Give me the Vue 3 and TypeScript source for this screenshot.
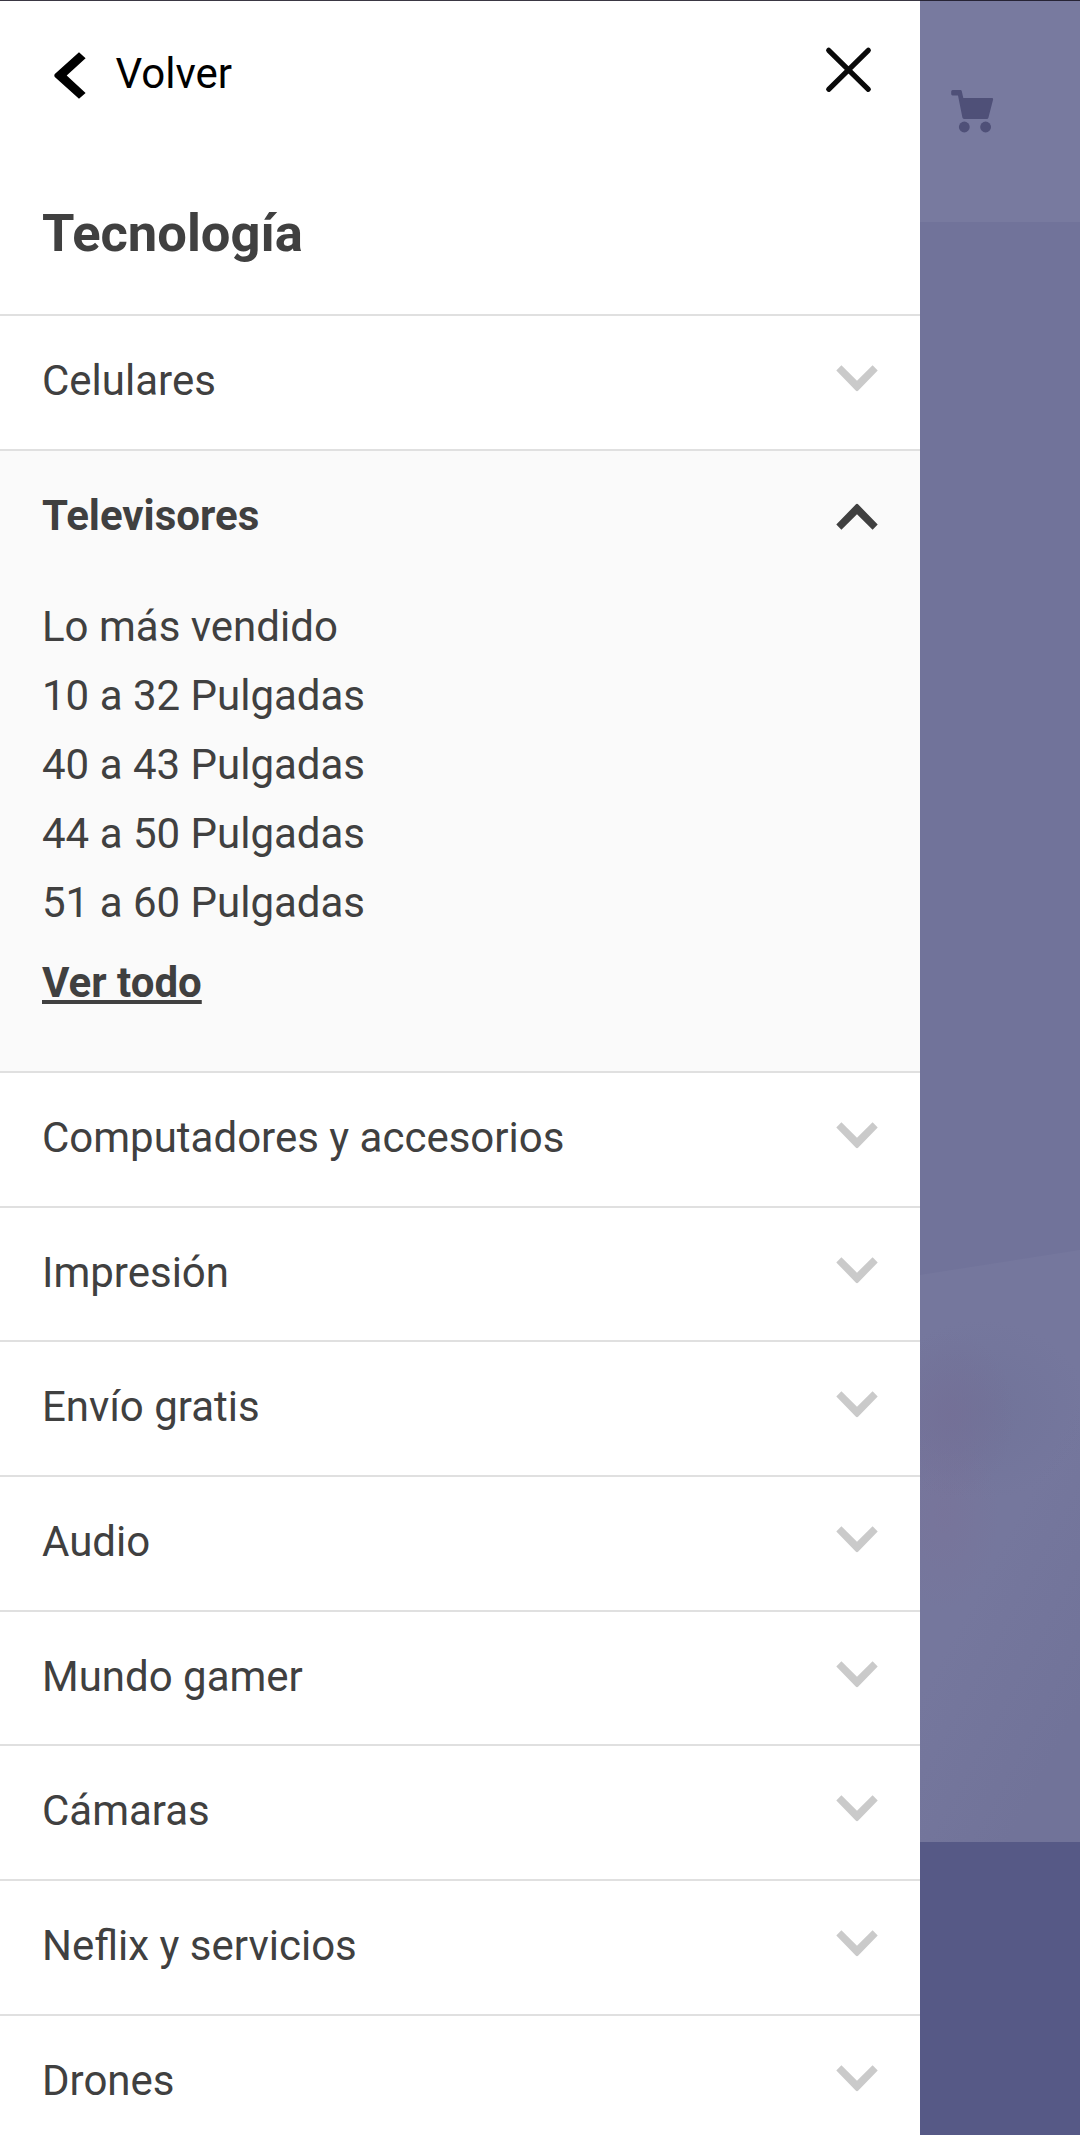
<script setup lang="ts">
import { ref } from 'vue'

interface Category {
  name: string
  links?: string[]
}

const categories: Category[] = [
  { name: 'Celulares' },
  {
    name: 'Televisores',
    links: ['Lo más vendido', '10 a 32 Pulgadas', '40 a 43 Pulgadas', '44 a 50 Pulgadas', '51 a 60 Pulgadas'],
  },
  { name: 'Computadores y accesorios' },
  { name: 'Impresión' },
  { name: 'Envío gratis' },
  { name: 'Audio' },
  { name: 'Mundo gamer' },
  { name: 'Cámaras' },
  { name: 'Neflix y servicios' },
  { name: 'Drones' },
]

const open = ref<string | null>('Televisores')

function toggle(category: Category) {
  open.value = open.value === category.name ? null : category.name
}
</script>

<template>
  <div class="screen">
    <nav class="drawer">
      <header class="bar">
        <button class="back" type="button">
          <svg class="back-icon" viewBox="0 0 32 48" aria-hidden="true">
            <path d="M25 0.3 31.6 6.2 12.7 23.5 31.6 40.9 25 46.7 0.8 24.9Q-0.2 23.5 0.8 22.1Z" />
          </svg>
          <span>Volver</span>
        </button>
        <button class="close" type="button" aria-label="Cerrar">
          <svg viewBox="0 0 46 46" aria-hidden="true">
            <path d="M3.7 3.3 43.3 42.3M43.3 3.3 3.7 42.3" />
          </svg>
        </button>
      </header>

      <h1 class="title">Tecnología</h1>

      <ul class="list">
        <li v-for="c in categories" :key="c.name" class="item" :class="{ open: open === c.name }">
          <button class="row" type="button" @click="toggle(c)">
            <span>{{ c.name }}</span>
            <svg class="chevron" viewBox="0 0 42 27" aria-hidden="true">
              <path d="M0.3 5.4 5.4 0.3 21 15.7 36.6 0.3 41.7 5.4 22.3 25.5Q21 26.8 19.7 25.5Z" />
            </svg>
          </button>
          <div v-if="c.links && open === c.name" class="sub">
            <a v-for="l in c.links" :key="l" class="link">{{ l }}</a>
            <a class="all">Ver todo</a>
          </div>
        </li>
      </ul>
    </nav>

    <aside class="page">
      <div class="page-header">
        <svg class="cart" viewBox="0 0 43 43" aria-hidden="true">
          <path d="M1.6 0H9.4Q10.6 0 10.8 1.2L12.3 8H41.2Q42.4 8 42.1 9.6L37.4 27.8Q37 29 35.8 29H13Q11.8 29 11.4 27.6L7 5.4H1.6Q0.2 5.4 0.2 4V1.6Q0.2 0 1.6 0Z" />
          <circle cx="13.3" cy="37" r="5.4" />
          <circle cx="34.6" cy="37" r="5.4" />
        </svg>
      </div>
      <div class="banner">
        <div class="hill"></div>
      </div>
      <div class="page-footer"></div>
    </aside>
    <div class="edge"></div>
  </div>
</template>

<style>
body {
  margin: 0;
}
</style>

<style scoped>
.screen {
  position: relative;
  display: flex;
  width: 1080px;
  height: 2135px;
  overflow: hidden;
  background: #fff;
  color: #404040;
  font-family: Roboto, sans-serif;
  font-size: 42px;
  line-height: 50px;
}

.edge {
  position: absolute;
  inset: 0 0 auto;
  height: 1px;
  background: rgba(24, 20, 34, 0.85);
}

button {
  border: 0;
  margin: 0;
  padding: 0;
  background: none;
  color: inherit;
  font: inherit;
  text-align: left;
}

svg {
  display: block;
}

.drawer {
  width: 920px;
  flex: none;
}

.bar {
  display: flex;
  justify-content: space-between;
  align-items: flex-start;
  box-sizing: border-box;
  height: 150px;
  padding: 47px 49px 0 54px;
  color: #000;
}

.back {
  display: flex;
  gap: 29.5px;
  padding-top: 2px;
}

.back-icon {
  width: 32px;
  height: 48px;
  margin-top: 3px;
  fill: #000;
}

.close svg {
  width: 46px;
  height: 46px;
  overflow: visible;
  fill: none;
  stroke: #0a0a0a;
  stroke-width: 5.2;
  stroke-linecap: round;
}

.title {
  box-sizing: border-box;
  height: 164px;
  margin: 0;
  padding: 52px 42px 0;
  font-size: 52.5px;
  font-weight: 700;
  line-height: 62px;
}

.list {
  margin: 0;
  padding: 0;
  list-style: none;
}

.item {
  box-sizing: border-box;
  border-top: 2px solid #e0e0e0;
}

.row {
  display: flex;
  justify-content: space-between;
  align-items: flex-start;
  box-sizing: border-box;
  width: 100%;
  height: 132.67px;
  padding: 40px 42px 0;
}

.chevron {
  width: 42px;
  height: 27px;
  margin-top: 9px;
  fill: #cacaca;
}

.open {
  height: 622.4px;
  background: #fafafa;
}

.open .row {
  font-weight: 700;
}

.open .chevron {
  margin-top: 12px;
  fill: #404040;
  transform: scaleY(-1);
}

.sub {
  display: flex;
  flex-direction: column;
  align-items: flex-start;
  padding: 8.3px 42px 0;
}

.link {
  line-height: 69px;
}

.all {
  margin-top: 21px;
  font-weight: 700;
  text-decoration: underline;
  text-decoration-thickness: 4px;
  text-underline-offset: 3px;
  text-decoration-skip-ink: none;
}

.page {
  display: flex;
  flex-direction: column;
  flex: 1;
}

.page-header {
  box-sizing: border-box;
  height: 222px;
  padding: 90px 0 0 31px;
  background: #787a9f;
}

.cart {
  width: 43px;
  height: 43px;
  fill: #4f5078;
}

.banner {
  height: 1620px;
  box-sizing: border-box;
  padding-top: 1028px;
  background: #71739a;
}

.hill {
  height: 592px;
  clip-path: polygon(0 25px, 100% 0, 100% 100%, 0 100%);
  background:
    radial-gradient(ellipse 65px 85px at 30px 165px, rgba(116, 111, 150, 0.8), rgba(116, 111, 150, 0)),
    radial-gradient(ellipse 55px 95px at 24px 265px, rgba(121, 115, 153, 0.65), rgba(121, 115, 153, 0)),
    radial-gradient(ellipse 110px 90px at 60px 160px, rgba(111, 114, 152, 0.7), rgba(111, 114, 152, 0)),
    linear-gradient(118deg, #75779d 50%, #717399 85%);
}

.page-footer {
  flex: 1;
  background: #565986;
}
</style>
